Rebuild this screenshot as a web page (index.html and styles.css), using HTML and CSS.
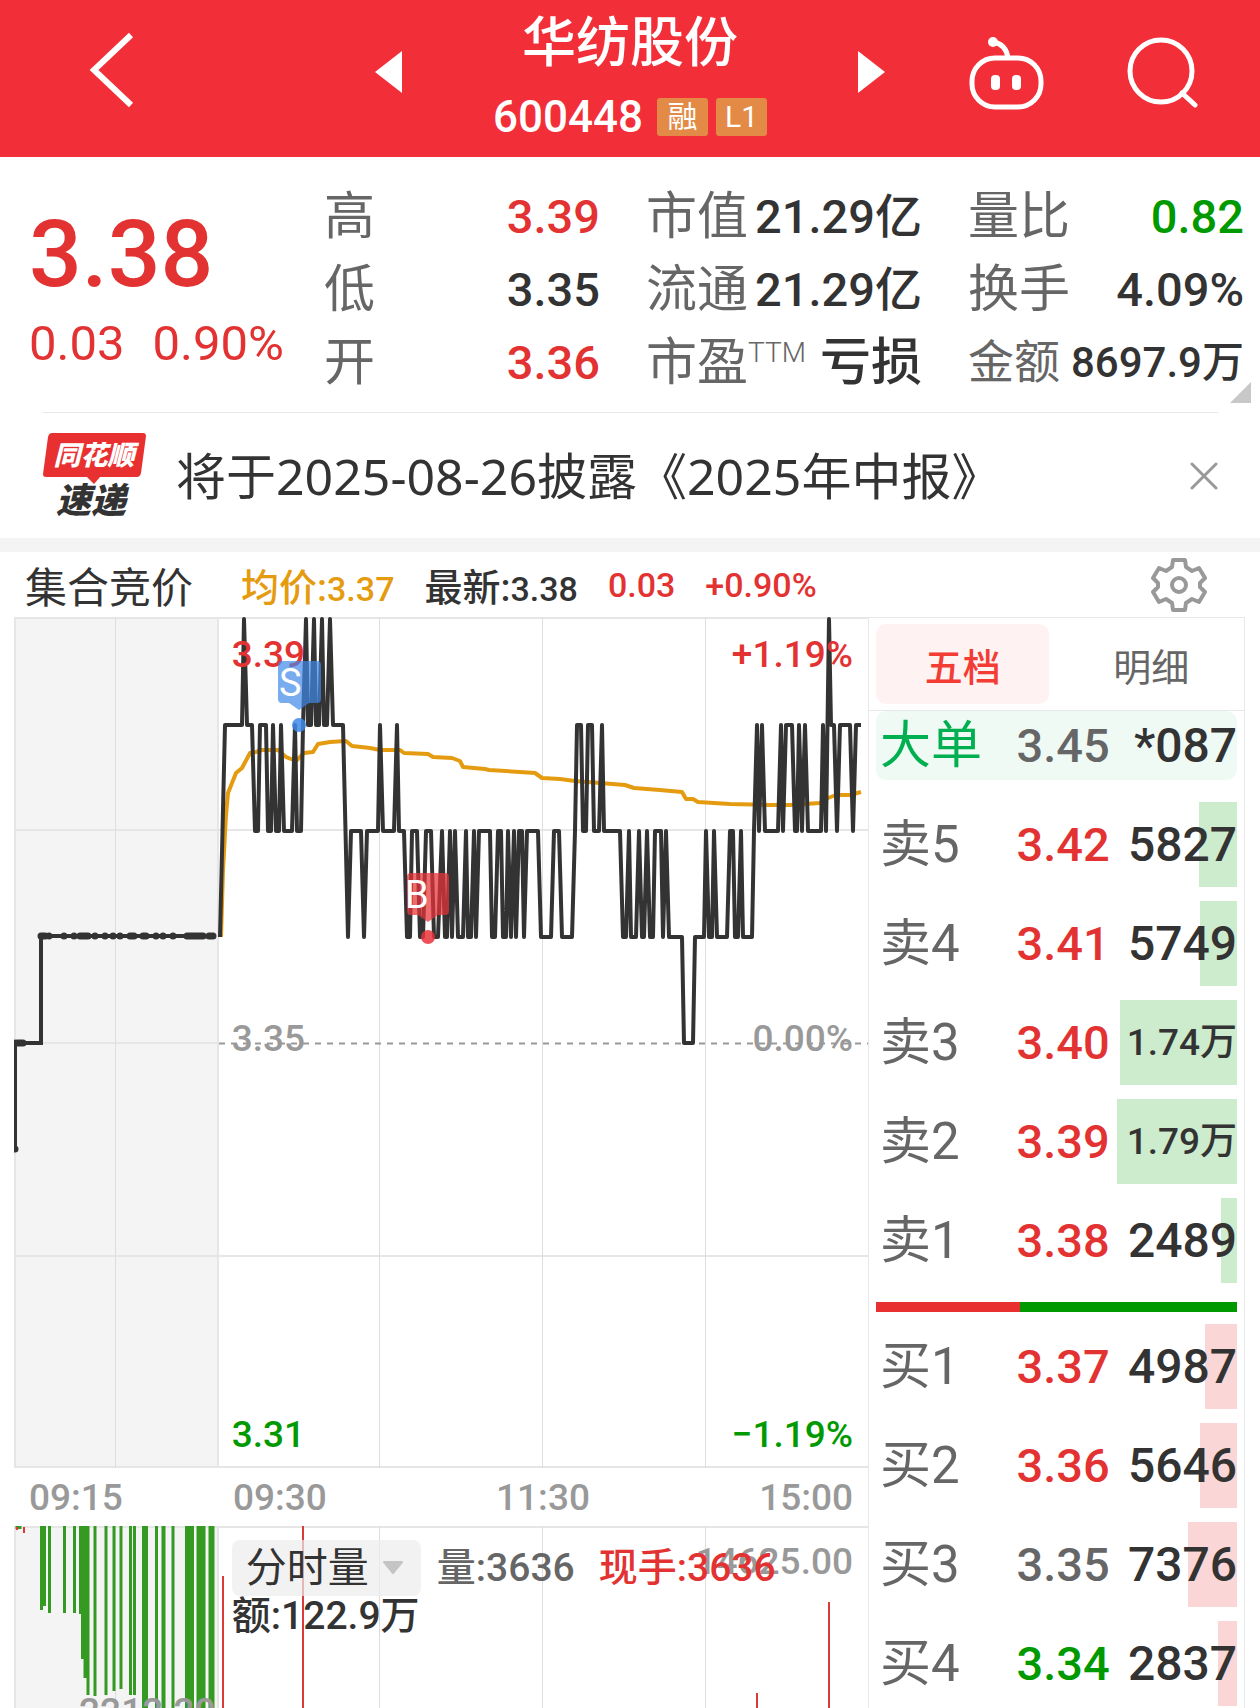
FILE: index.html
```html
<!DOCTYPE html>
<html lang="zh-CN">
<head>
    <meta charset="UTF-8">
    <meta name="viewport" content="width=device-width, initial-scale=1.0">
    <title>华纺股份 600448</title>
    <link rel="stylesheet" href="styles.css">
</head>
<body>
    <header class="topbar">
        <button class="icon-btn" aria-label="返回">
            <svg width="52" height="80" viewBox="84 30 52 80"><path d="M129 33 L92 68 L129 103" fill="none" stroke="#fff" stroke-width="6"/></svg>
        </button>
        <button class="icon-btn prev" aria-label="上一只">
            <svg width="27" height="42" viewBox="0 0 27 42"><path d="M27 0 V42 L0 21 Z" fill="#fff"/></svg>
        </button>
        <div class="stock">
            <h1>华纺股份</h1>
            <div class="stock-code">
                <span>600448</span>
                <span class="badge">融</span>
                <span class="badge">L1</span>
            </div>
        </div>
        <button class="icon-btn next" aria-label="下一只">
            <svg width="27" height="42" viewBox="0 0 27 42"><path d="M0 0 V42 L27 21 Z" fill="#fff"/></svg>
        </button>
        <button class="icon-btn" aria-label="智能助手">
            <svg width="76" height="76" viewBox="967 35 76 76">
                <rect x="971" y="59" width="69" height="49" rx="23" fill="none" stroke="#fff" stroke-width="5"/>
                <path d="M992 43 Q1005 45 1007 59" fill="none" stroke="#fff" stroke-width="5"/>
                <circle cx="992" cy="43" r="5" fill="#fff"/>
                <rect x="990" y="76" width="9" height="15" rx="4" fill="#fff"/>
                <rect x="1011" y="76" width="9" height="15" rx="4" fill="#fff"/>
            </svg>
        </button>
        <button class="icon-btn" aria-label="搜索">
            <svg width="72" height="72" viewBox="1125 36 72 72">
                <circle cx="1160" cy="71" r="31" fill="none" stroke="#fff" stroke-width="5"/>
                <path d="M1181 93 L1194 105" stroke="#fff" stroke-width="5" stroke-linecap="round"/>
            </svg>
        </button>
    </header>

    <section class="summary">
        <div class="price-box red">
            <div class="price">3.38</div>
            <div class="change"><span>0.03</span><span>0.90%</span></div>
        </div>
        <dl class="stats">
            <div><dt>高</dt><dd class="red">3.39</dd></div>
            <div><dt>低</dt><dd>3.35</dd></div>
            <div><dt>开</dt><dd class="red">3.36</dd></div>
        </dl>
        <dl class="stats">
            <div><dt>市值</dt><dd>21.29亿</dd></div>
            <div><dt>流通</dt><dd>21.29亿</dd></div>
            <div><dt>市盈<sup>TTM</sup></dt><dd class="text">亏损</dd></div>
        </dl>
        <dl class="stats">
            <div><dt>量比</dt><dd class="green">0.82</dd></div>
            <div><dt>换手</dt><dd>4.09%</dd></div>
            <div class="small"><dt>金额</dt><dd>8697.9万</dd></div>
        </dl>
        <svg class="corner" width="21" height="21" viewBox="0 0 21 21"><path d="M21 0 V21 H0 Z" fill="#c8c8c8"/></svg>
    </section>

    <section class="news">
        <svg class="news-logo" width="104" height="86" viewBox="42 433 104 86">
            <path d="M52 433 H143 Q146 433 146 436 L141 473 Q140 477 137 477 H100 L94 484 L87 477 H46 Q43 477 43 474 L48 437 Q49 433 52 433 Z" fill="#e93030"/>
            <text class="logo-top" x="94" y="465" text-anchor="middle">同花顺</text>
            <text class="logo-bottom" x="91" y="513" text-anchor="middle">速递</text>
        </svg>
        <a href="#" class="news-text">将于2025-08-26披露《2025年中报》</a>
        <button class="close-btn" aria-label="关闭">
            <svg width="28" height="28" viewBox="0 0 28 28"><path d="M2 2 L26 26 M26 2 L2 26" stroke="#999" stroke-width="3" stroke-linecap="round"/></svg>
        </button>
    </section>

    <main>
        <div class="chart-head">
            <span class="auction">集合竞价</span>
            <span class="orange">均价:<b>3.37</b></span>
            <span>最新:<b>3.38</b></span>
            <b class="red">0.03</b>
            <b class="red">+0.90%</b>
            <button class="gear-btn" aria-label="设置">
                <svg width="56" height="56" viewBox="0 0 56 56" fill="none" stroke="#999" stroke-width="4" stroke-linejoin="round">
                    <path d="M22 3 H34 L35 10 L41 14 L48 11 L54 21 L49 26 V30 L54 35 L48 45 L41 42 L35 46 L34 53 H22 L21 46 L15 42 L8 45 L2 35 L7 30 V26 L2 21 L8 11 L15 14 L21 10 Z"/>
                    <circle cx="28" cy="28" r="7"/>
                </svg>
            </button>
        </div>

        <div class="board">
            <div class="charts">
                <div class="price-chart">
                    <svg viewBox="14 617 854 851">
                        <rect x="14" y="617" width="205" height="851" fill="#f4f4f4"/>
                        <!-- grid -->
                        <g stroke="#e6e6e6" stroke-width="2" fill="none">
                            <path d="M14 618 H868 M14 830 H868 M14 1043 H218 M14 1256 H868 M14 1467 H868"/>
                            <path d="M15 617 V1468 M218 617 V1468"/>
                        </g>
                        <path d="M115.500 617 V1468 M379.500 617 V1468 M542.500 617 V1468 M705.500 617 V1468" stroke="#dedede"/>
                        <path d="M219 1043.500 H868" stroke="#999" stroke-width="2" stroke-dasharray="6 6"/>
                        <!-- call auction -->
                        <path d="M15 1149 V1043 H41 V936 H216" fill="none" stroke="#333" stroke-width="4"/>
                        <path d="M15 1149h0 M14 1043h0 M17 1043h6 M41 936h4 M49 936h0 M64 936h0 M74 936h0 M80 936h8 M95 936h0 M105 936h0 M113 936h0 M120 936h0 M130 936h4 M143 936h3 M156 936h0 M163 936h0 M173 936h0 M187 936h16 M209 936h4" stroke="#333" stroke-width="7" stroke-linecap="round"/>
                        <!-- average price -->
                        <polyline fill="none" stroke="#e59b10" stroke-width="4" stroke-linejoin="round" points="221,937 223,870 226,815 228,793 232,783 236,773 242,768 250,753 256,752 262,750 278,750 286,757 296,761 304,753 313,752 318,744 330,742 346,741 352,746 370,748 380,750 400,750 404,753 428,754 433,757 452,758 460,761 463,767 485,769 489,770 535,773 542,778 560,779 575,781 600,783 625,785 634,788 660,790 682,792 686,799 693,799 698,802 730,804 770,805 790,805 820,803 828,798 836,795 850,795 861,792"/>
                        <!-- price -->
                        <polyline fill="none" stroke="#333" stroke-width="4" stroke-linejoin="round" points="220,937 225,725 242,725 244,619 247,725 252,725 255,831 258,831 260,725 266,725 268,831 271,831 273,725 276,831 279,831 281,725 284,831 292,831 295,725 297,831 301,831 303,725 306,619 308,725 311,725 314,619 316,725 319,725 322,619 324,725 327,725 330,619 333,725 343,725 348,937 351,831 361,831 364,937 367,831 378,831 380,725 383,831 394,831 397,725 399,831 404,831 407,937 410,937 412,831 417,831 420,937 423,937 426,831 431,831 434,937 438,937 442,831 445,937 447,937 450,831 452,937 455,831 458,937 463,937 466,831 468,937 471,937 474,831 476,937 479,831 490,831 492,937 495,937 498,831 501,831 503,937 506,937 508,831 511,937 514,831 516,937 519,831 522,831 524,937 527,831 538,831 541,937 551,937 554,831 559,831 562,937 572,937 575,831 577,725 581,725 583,831 586,831 588,725 592,725 594,831 599,831 602,725 604,831 620,831 623,937 626,937 629,831 631,937 636,937 639,831 642,937 644,937 647,831 650,937 653,937 655,831 661,831 663,937 666,831 669,937 682,937 684,1043 693,1043 695,937 704,937 706,831 709,937 712,937 714,831 717,937 727,937 730,831 733,831 735,937 738,937 741,831 743,937 752,937 754,831 757,725 759,831 762,725 765,831 778,831 781,725 783,831 786,725 792,725 795,831 797,831 799,725 802,831 805,725 808,831 821,831 823,725 826,831 829,619 831,725 834,725 837,831 840,725 850,725 853,831 856,725 861,725"/>
                    </svg>
                    <span class="mark top-left red">3.39</span>
                    <span class="mark top-right red">+1.19%</span>
                    <span class="mark mid-left">3.35</span>
                    <span class="mark mid-right">0.00%</span>
                    <span class="mark low-left green">3.31</span>
                    <span class="mark low-right green">−1.19%</span>
                    <!-- trade markers -->
                    <svg class="trades" viewBox="14 617 854 851">
                        <path d="M282 661 H317 Q321 661 321 665 V699 Q321 703 317 703 H309 L299 710 L289 703 H282 Q278 703 278 699 V665 Q278 661 282 661 Z" fill="#4088e8" fill-opacity="0.7"/>
                        <circle cx="299" cy="725" r="7" fill="#4088e8" fill-opacity="0.85"/>
                        <text x="279" y="696">S</text>
                        <path d="M411 873 H445 Q449 873 449 877 V911 Q449 915 445 915 H438 L428 922 L418 915 H411 Q407 915 407 911 V877 Q407 873 411 873 Z" fill="#e83338" fill-opacity="0.72"/>
                        <circle cx="428" cy="937" r="7" fill="#e83338" fill-opacity="0.85"/>
                        <text x="405" y="908">B</text>
                    </svg>
                </div>

                <div class="axis">
                    <span>09:15</span>
                    <span>09:30</span>
                    <span>11:30</span>
                    <span>15:00</span>
                </div>

                <div class="volume-chart">
                    <svg viewBox="14 1525 854 183">
                        <rect x="14" y="1525" width="205" height="183" fill="#f4f4f4"/>
                        <path d="M14 1526 H868 M15 1525 V1708 M218 1525 V1708" stroke="#e6e6e6" stroke-width="2"/>
                        <path d="M115.500 1525 V1708 M379.500 1525 V1708 M542.500 1525 V1708 M705.500 1525 V1708" stroke="#dedede"/>
                        <g stroke="#349a22" stroke-width="3">
                            <path d="M17 1525 V1528 M20 1525 V1528"/>
                            <path d="M41.500 1525 V1609 M44.500 1525 V1605 M49.500 1525 V1612 M64.500 1525 V1612 M74.500 1525 V1612 M80.500 1525 V1613 M82.500 1525 V1658 M85 1525 V1677 M88 1525 V1694 M95 1525 V1695 M106 1525 V1694 M114 1525 V1690 M121 1525 V1688 M130.500 1525 V1694 M134.500 1525 V1694"/>
                            <path d="M156.500 1525 V1708 M173 1525 V1708 M186.500 1525 V1708 M189.500 1525 V1708 M192.500 1525 V1708"/>
                            <path d="M163.500 1525 V1708" stroke-width="4"/>
                            <path d="M145 1525 V1708 M211.500 1525 V1708" stroke-width="6"/>
                            <path d="M201 1525 V1708" stroke-width="9"/>
                        </g>
                        <path d="M17 1526 V1529 M24 1526 V1532 M223 1575 V1708 M303 1525 V1708 M757 1692 V1708 M829 1601 V1708" stroke="#d93a3a" stroke-width="2"/>
                    </svg>
                    <span class="vol-max">14625.00</span>
                    <span class="vol-auction">2212.20</span>
                    <div class="vol-info">
                        <div class="vol-row">
                            <div class="picker">
                                <select aria-label="指标"><option>分时量</option></select>
                                <svg width="22" height="14" viewBox="0 0 22 14"><path d="M2 1 H20 L11 12 Z" fill="#c4c4c4" stroke="#c4c4c4" stroke-width="2" stroke-linejoin="round"/></svg>
                            </div>
                            <span class="gray">量:3636</span>
                            <span class="red">现手:3636</span>
                        </div>
                        <div>额:122.9万</div>
                    </div>
                </div>
            </div>

            <aside class="orders">
                <div class="tabs">
                    <button class="tab active">五档</button>
                    <button class="tab">明细</button>
                </div>
                <table class="big-order">
                    <tr><th>大单</th><td class="gray">3.45</td><td>*087</td></tr>
                </table>
                <table class="book sell">
                    <tr><th>卖5</th><td class="red">3.42</td><td><i style="width: 32%"></i>5827</td></tr>
                    <tr><th>卖4</th><td class="red">3.41</td><td><i style="width: 31%"></i>5749</td></tr>
                    <tr><th>卖3</th><td class="red">3.40</td><td class="wan"><i style="width: 97%"></i>1.74万</td></tr>
                    <tr><th>卖2</th><td class="red">3.39</td><td class="wan"><i style="width: 100%"></i>1.79万</td></tr>
                    <tr><th>卖1</th><td class="red">3.38</td><td><i style="width: 13%"></i>2489</td></tr>
                </table>
                <div class="ratio"><i style="width: 40%"></i></div>
                <table class="book buy">
                    <tr><th>买1</th><td class="red">3.37</td><td><i style="width: 27%"></i>4987</td></tr>
                    <tr><th>买2</th><td class="red">3.36</td><td><i style="width: 31%"></i>5646</td></tr>
                    <tr><th>买3</th><td class="gray">3.35</td><td><i style="width: 41%"></i>7376</td></tr>
                    <tr><th>买4</th><td class="green">3.34</td><td><i style="width: 16%"></i>2837</td></tr>
                </table>
            </aside>
        </div>
    </main>
</body>
</html>
```

FILE: styles.css
```css
* {
    box-sizing: border-box;
}
body {
    margin: 0;
    height: 100vh;
    overflow: hidden;
    background: #fff;
    color: #333;
    font-family: Roboto, "Noto Sans CJK SC", sans-serif;
    font-weight: 500;
}
button {
    border: none;
    background: none;
    padding: 0;
    font: inherit;
    color: inherit;
    cursor: pointer;
}
svg {
    display: block;
}
h1, dl, dd {
    margin: 0;
}
b {
    font-weight: 500;
}
.red {
    color: #e33232;
}
.green {
    color: #009900;
}
.gray {
    color: #666;
}
.orange {
    color: #e59b10;
}

/* top bar */
.topbar {
    display: grid;
    grid-template-columns: 224fr 178fr 455fr 73fr 150fr 162fr;
    align-items: center;
    padding: 0 17px 14px 0;
    background: #f22f38;
    color: #fff;
}
.icon-btn {
    display: flex;
    justify-content: center;
}
.icon-btn.prev {
    justify-content: flex-end;
}
.icon-btn.next {
    justify-content: flex-start;
}
.stock {
    padding: 12px 0 2px;
    text-align: center;
}
.stock h1 {
    font-size: 54px;
    line-height: 64px;
    font-weight: 500;
}
.stock-code {
    display: flex;
    justify-content: center;
    align-items: center;
    gap: 8px;
    margin-top: 17px;
    font-size: 44px;
    line-height: 48px;
}
.stock-code span:first-child {
    margin-right: 6px;
}
.badge {
    width: 51px;
    border-radius: 3px;
    background: #e38b46;
    font-size: 30px;
    line-height: 38px;
    font-weight: 400;
}

/* summary */
.summary {
    position: relative;
    display: grid;
    grid-template-columns: 249px 1fr 1fr 1fr;
    gap: 46px;
    padding: 23px 16px 13px 29px;
}
.price-box {
    padding-top: 25px;
}
.price {
    font-size: 93px;
    line-height: 100px;
}
.change {
    display: flex;
    gap: 28px;
    margin-top: 9px;
    font-size: 49px;
    line-height: 60px;
    font-weight: 400;
}
.stats div {
    display: flex;
    justify-content: space-between;
    font-size: 47px;
    line-height: 73px;
    white-space: nowrap;
}
.stats dt {
    color: #666;
    font-size: 51px;
    font-weight: 400;
}
.stats .text {
    font-size: 51px;
}
.stats .small {
    font-size: 42px;
}
.stats .small dt {
    font-size: 46px;
}
.stats sup {
    font-size: 28px;
    line-height: 28px;
    font-weight: 300;
}
.corner {
    position: absolute;
    right: 9px;
    bottom: 9px;
}

/* news */
.news {
    display: flex;
    align-items: center;
    height: 126px;
    margin: 0 42px;
    border-top: 1px solid #e8e8e8;
}
.news-text {
    flex: 1;
    margin-left: 30px;
    color: #333;
    font-family: "Noto Sans", "Noto Sans CJK SC", sans-serif;
    font-size: 50px;
    line-height: 60px;
    font-weight: 400;
    text-decoration: none;
    white-space: nowrap;
}
.logo-top, .logo-bottom {
    font-size: 27px;
    font-weight: 900;
    font-style: italic;
    fill: #fff;
}
.logo-bottom {
    font-size: 35px;
    fill: #333;
}

/* chart header */
main {
    border-top: 14px solid #f4f4f4;
}
.chart-head {
    display: flex;
    align-items: center;
    gap: 30px;
    height: 65px;
    padding: 0 53px 0 25px;
    font-size: 38px;
    white-space: nowrap;
}
.chart-head b {
    font-size: 34px;
}
.auction {
    margin-right: 18px;
    font-size: 42px;
    font-weight: 400;
}
.gear-btn {
    margin-left: auto;
}

/* charts */
.board {
    display: grid;
    grid-template-columns: 854fr 377fr;
    padding: 0 15px 0 14px;
}
.charts > div {
    position: relative;
}
.charts svg {
    width: 100%;
}
.mark, .axis, .vol-max, .vol-auction {
    color: #999;
    font-size: 37px;
    line-height: 44px;
}
.mark, .vol-max, .vol-auction, .vol-info {
    position: absolute;
}
.trades {
    position: absolute;
    top: 0;
    left: 0;
}
.trades text {
    fill: #fff;
    font-size: 38px;
    font-weight: 400;
}
.mark.red {
    color: #e33232;
}
.mark.green {
    color: #009900;
}
.top-left, .mid-left, .low-left {
    left: 25.5%;
}
.top-right, .mid-right, .low-right {
    right: 15px;
}
.top-left, .top-right {
    top: 16px;
}
.mid-left, .mid-right {
    top: 47%;
}
.low-left, .low-right {
    bottom: 11px;
}
.axis {
    display: grid;
    grid-template-columns: 219fr 204fr 212fr 219fr;
    line-height: 57px;
    padding-top: 1px;
}
.axis span:first-child {
    padding-left: 15px;
}
.axis span:nth-child(3) {
    text-align: center;
}
.axis span:last-child {
    padding-right: 15px;
    text-align: right;
}
.vol-max {
    top: 14px;
    right: 15px;
}
.vol-auction {
    top: 164px;
    right: 76.4%;
}
.vol-info {
    top: 14px;
    left: 25.5%;
    font-size: 39px;
    line-height: 40px;
    white-space: nowrap;
}
.vol-row {
    display: flex;
    align-items: center;
    gap: 24px;
}
.picker {
    position: relative;
    margin-right: -8px;
}
.picker select {
    display: block;
    width: 189px;
    height: 56px;
    padding: 0 14px;
    border: none;
    border-radius: 8px;
    appearance: none;
    background: rgba(236, 236, 236, 0.7);
    color: #333;
    font: inherit;
    font-size: 41px;
    font-weight: 400;
}
.picker svg {
    position: absolute;
    top: 21px;
    right: 17px;
    width: 22px;
}

/* order book */
.orders {
    border: 1px solid #e8e8e8;
    border-bottom: none;
}
.tabs {
    display: flex;
    padding: 6px 7px;
    border-bottom: 1px solid #e8e8e8;
}
.tab {
    flex: 0 0 48%;
    height: 80px;
    border-radius: 10px;
    color: #666;
    font-size: 38px;
    font-weight: 400;
}
.tab:last-child {
    flex: 1;
    padding-left: 16px;
}
.tab.active {
    background: #fff2f2;
    color: #f23c34;
    font-weight: 500;
}
table {
    width: calc(100% - 14px);
    margin: 0 7px;
    border-collapse: collapse;
    table-layout: fixed;
    font-size: 48px;
    line-height: 60px;
}
th {
    padding: 0 0 0 4px;
    color: #666;
    font-size: 51px;
    font-weight: 400;
    text-align: left;
}
td {
    position: relative;
    padding: 0;
    text-align: right;
    white-space: nowrap;
}
td:nth-child(2) {
    padding-right: 7px;
    font-size: 47px;
}
.big-order {
    margin-bottom: 15px;
    border-radius: 10px;
    background: #f0faf5;
}
.big-order tr {
    height: 69px;
}
.big-order th {
    color: #00b050;
}
.book tr {
    height: 99px;
}
.book .wan {
    font-size: 37px;
}
.book i {
    position: absolute;
    z-index: -1;
    top: 7px;
    right: 0;
    bottom: 7px;
    background: #cdebcd;
}
.buy i {
    background: #fad6d6;
}
.ratio {
    height: 10px;
    margin: 12px 7px 5px;
    background: #009900;
}
.ratio i {
    display: block;
    height: 10px;
    background: #e93030;
}
```
